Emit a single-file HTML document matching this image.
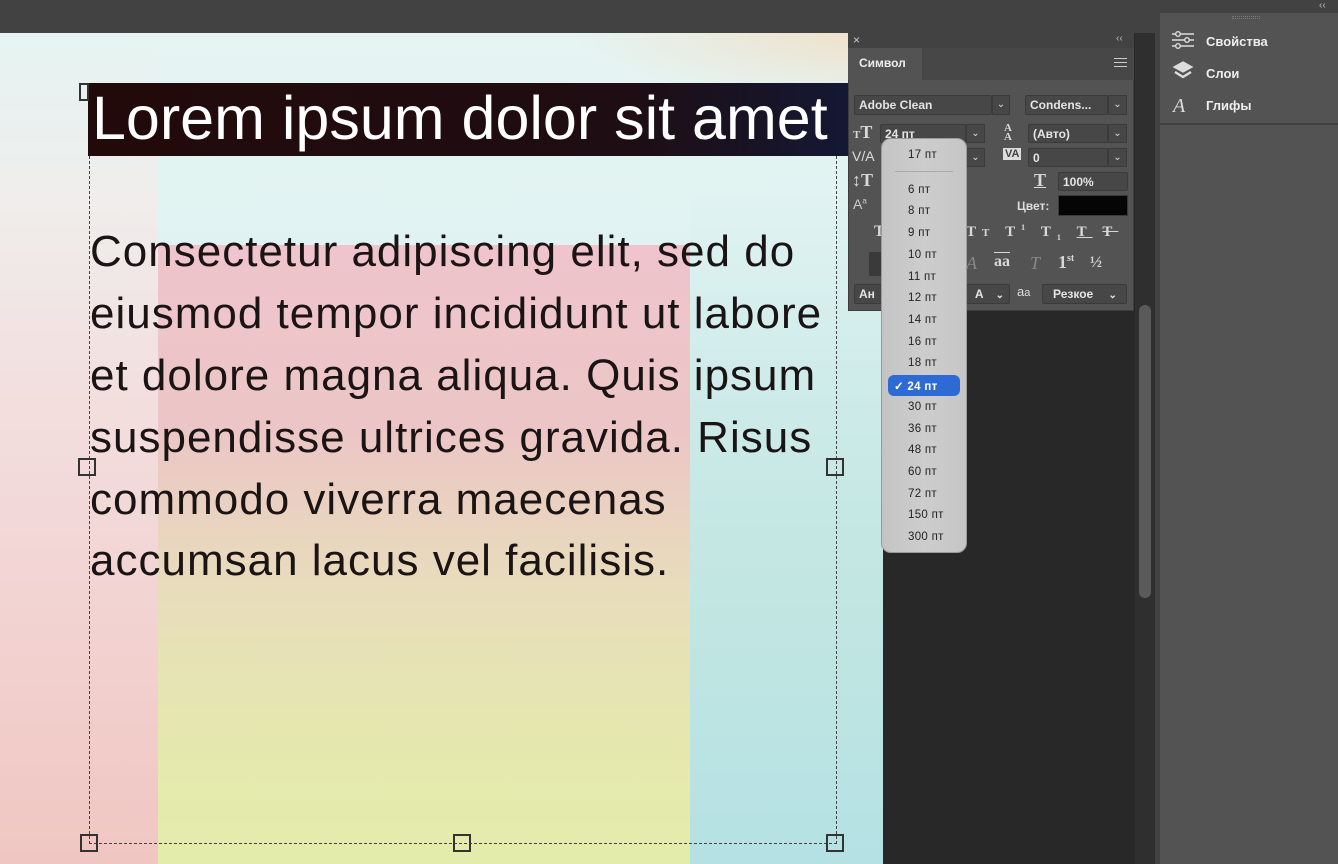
<!DOCTYPE html>
<html><head><meta charset="utf-8"><style>
*{margin:0;padding:0;box-sizing:border-box}
body{width:1338px;height:864px;overflow:hidden;background:#424242;font-family:"Liberation Sans",sans-serif;position:relative}
.a{position:absolute}
#canvas{left:0;top:33px;width:883px;height:831px;overflow:hidden;
background:linear-gradient(180deg,#e6f4f2 0%,#dff3f2 30%,#d6eeee 60%,#cfeaea 100%);}
.t{color:#1a1414;font-size:44px;letter-spacing:1px;white-space:nowrap;position:absolute;left:90px}
.f{background:#474747;border:1px solid #3b3b3b;border-radius:2px;color:#e4e4e4;font-size:12px;font-weight:bold;padding-left:4px;line-height:18px}
.ch{background:#474747;border:1px solid #3b3b3b;color:#ddd;font-size:10px;text-align:center;line-height:18px}
.ic{color:#d8d8d8;font-family:"Liberation Serif",serif;font-weight:bold;font-size:18px}
.dd{position:absolute;left:908px;font-size:11.5px;color:#222;letter-spacing:.3px}
.h{position:absolute;width:18px;height:18px;border:2px solid #333;background:transparent}
</style></head><body>
<div id="canvas" class="a">
  <div class="a" style="left:0;top:0;width:158px;height:831px;background:linear-gradient(180deg,rgba(243,230,228,0) 0%,rgba(243,236,234,.8) 20%,#f3dede 45%,#f0c6c2 100%)"></div>
  <div class="a" style="left:0;top:0;width:883px;height:200px;background:radial-gradient(ellipse at 100% 0%,#efe0c8 0%,rgba(240,230,210,0) 25%)"></div>
  <div class="a" style="left:158px;top:212px;width:532px;height:619px;background:linear-gradient(180deg,#efc4cc 0%,#ecc6c6 30%,#e8dcbc 55%,#e5e8ae 80%,#e4ecab 100%)"></div>
  <div class="a" style="left:690px;top:150px;width:193px;height:681px;background:linear-gradient(180deg,rgba(216,239,238,0),#c2e6e2 60%,#b5e1e4)"></div>
  <div class="a" style="left:88px;top:50px;width:760px;height:73px;background:linear-gradient(90deg,#230a0a 0%,#1e0d12 70%,#141833 100%)"></div>
  <div class="a" style="left:92px;top:48px;color:#fff;font-size:61px;letter-spacing:0;white-space:nowrap;line-height:75px">Lorem ipsum dolor sit amet</div>
  <div class="a" style="left:89px;top:123px;width:748px;height:688px;border-left:1px dashed #444;border-right:1px dashed #444;border-bottom:1px dashed #444"></div>
  <div class="t" style="top:194px">Consectetur adipiscing elit, sed do</div>
  <div class="t" style="top:256px">eiusmod tempor incididunt ut labore</div>
  <div class="t" style="top:318px">et dolore magna aliqua. Quis ipsum</div>
  <div class="t" style="top:380px">suspendisse ultrices gravida. Risus</div>
  <div class="t" style="top:442px">commodo viverra maecenas</div>
  <div class="t" style="top:503px">accumsan lacus vel facilisis.</div>
  <div class="h" style="left:79px;top:50px;width:10px;height:18px"></div>
  <div class="h" style="left:78px;top:425px"></div>
  <div class="h" style="left:826px;top:425px"></div>
  <div class="h" style="left:80px;top:801px"></div>
  <div class="h" style="left:453px;top:801px"></div>
  <div class="h" style="left:826px;top:801px"></div>
</div>
<div class="a" style="left:883px;top:33px;width:252px;height:831px;background:#282828"></div>
<div class="a" style="left:1135px;top:33px;width:20px;height:831px;background:#2f2f2f"></div>
<div class="a" style="left:1139px;top:305px;width:12px;height:293px;background:#5a5a5a;border-radius:6px"></div>
<div class="a" style="left:1160px;top:13px;width:178px;height:851px;background:#535353"></div>
<div class="a" style="left:1160px;top:123px;width:178px;height:2px;background:#3f3f3f"></div>
<div class="a" style="left:1319px;top:0px;color:#bbb;font-size:10px">&lsaquo;&lsaquo;</div>
<div class="a" style="left:1232px;top:16px;width:28px;height:3px;border-top:1px dotted #777;border-bottom:1px dotted #777"></div>
<svg class="a" style="left:1172px;top:30px" width="22" height="88" viewBox="0 0 22 88" fill="none" stroke="#ddd" stroke-width="1.4">
<path d="M0 4h22M0 10h22M0 16h22"/><circle cx="6" cy="4" r="2.3" fill="#535353"/><circle cx="15" cy="10" r="2.3" fill="#535353"/><circle cx="6" cy="16" r="2.3" fill="#535353"/>
<path d="M11 32l9 5-9 5-9-5z" fill="#ddd"/><path d="M3 42l8 5 8-5" stroke-width="2.4"/>
<text x="1" y="82" font-family="Liberation Serif" font-style="italic" font-size="20" fill="#ddd" stroke="none">A</text></svg>
<div class="a" style="left:1206px;top:34px;color:#eee;font-size:13px;font-weight:bold">Свойства</div>
<div class="a" style="left:1206px;top:66px;color:#eee;font-size:13px;font-weight:bold">Слои</div>
<div class="a" style="left:1206px;top:98px;color:#eee;font-size:13px;font-weight:bold">Глифы</div>
<!-- character panel -->
<div class="a" style="left:848px;top:33px;width:286px;height:278px;background:#535353;border:1px solid #3d3d3d"></div>
<div class="a" style="left:848px;top:33px;width:286px;height:15px;background:#424242"></div>
<div class="a" style="left:853px;top:33px;color:#ccc;font-size:12px">×</div>
<div class="a" style="left:1116px;top:33px;color:#bbb;font-size:10px">&lsaquo;&lsaquo;</div>
<div class="a" style="left:848px;top:48px;width:286px;height:32px;background:#474747"></div>
<div class="a" style="left:848px;top:48px;width:74px;height:32px;background:#535353;color:#eee;font-size:12px;font-weight:bold;padding:8px 0 0 11px">Символ</div>
<div class="a" style="left:1114px;top:58px;width:13px;height:9px;border-top:1px solid #ccc;border-bottom:1px solid #ccc"><div style="margin-top:3px;border-top:1px solid #ccc"></div></div>
<div class="a f" style="left:854px;top:95px;width:138px;height:20px">Adobe Clean</div><div class="a ch" style="left:992px;top:95px;width:18px;height:20px">⌄</div>
<div class="a f" style="left:1025px;top:95px;width:83px;height:20px">Condens...</div><div class="a ch" style="left:1108px;top:95px;width:19px;height:20px">⌄</div>
<div class="a ic" style="left:853px;top:122px"><span style="font-size:11px">T</span>T</div>
<div class="a f" style="left:880px;top:124px;width:86px;height:19px">24 пт</div><div class="a ch" style="left:966px;top:124px;width:19px;height:19px">⌄</div>
<div class="a ic" style="left:1004px;top:124px;font-size:11px;line-height:9px">A<br>A</div>
<div class="a f" style="left:1028px;top:124px;width:80px;height:19px">(Авто)</div><div class="a ch" style="left:1108px;top:124px;width:19px;height:19px">⌄</div>
<div class="a" style="left:852px;top:148px;color:#ddd;font-size:14px">V/A</div>
<div class="a ch" style="left:966px;top:148px;width:19px;height:19px">⌄</div>
<div class="a" style="left:1003px;top:148px;background:#ddd;color:#444;font-size:11px;font-weight:bold;padding:0 2px">VA</div>
<div class="a f" style="left:1028px;top:148px;width:80px;height:19px">0</div><div class="a ch" style="left:1108px;top:148px;width:19px;height:19px">⌄</div>
<div class="a ic" style="left:852px;top:170px">↕T</div>
<div class="a ic" style="left:1034px;top:170px;text-decoration:underline">T</div>
<div class="a f" style="left:1058px;top:172px;width:70px;height:19px">100%</div>
<div class="a" style="left:853px;top:196px;color:#ccc;font-size:14px">A<sup style="font-size:8px">a</sup></div>
<div class="a" style="left:1017px;top:199px;color:#ddd;font-size:12px;font-weight:bold">Цвет:</div>
<div class="a" style="left:1058px;top:195px;width:70px;height:21px;background:#050505;border:1px solid #3a3a3a"></div>
<div class="a ic" style="left:874px;top:223px;font-size:16px">T</div>
<div class="a ic" style="left:966px;top:223px;font-size:15px;letter-spacing:6px">T<span style="font-size:11px">T</span>&nbsp;T<sup style="font-size:8px">1</sup>&nbsp;T<sub style="font-size:8px">1</sub>&nbsp;<u>T</u>&nbsp;<s>T</s></div>
<div class="a" style="left:869px;top:252px;width:16px;height:24px;background:#3a3a3a"></div>
<div class="a" style="left:966px;top:253px;color:#888;font-family:'Liberation Serif',serif;font-style:italic;font-size:18px">A</div>
<div class="a ic" style="left:994px;top:253px;font-size:16px;text-decoration:overline">aa</div>
<div class="a" style="left:1030px;top:253px;color:#888;font-family:'Liberation Serif',serif;font-style:italic;font-size:18px">T</div>
<div class="a ic" style="left:1058px;top:252px;font-size:18px">1<sup style="font-size:10px">st</sup></div>
<div class="a ic" style="left:1090px;top:254px;font-size:16px">½</div>
<div class="a f" style="left:854px;top:284px;width:156px;height:20px">Ан<span style="margin-left:100px">А</span><span style="margin-left:12px;font-size:10px">⌄</span></div>
<div class="a" style="left:1017px;top:284px;color:#ddd;font-size:13px">a<span style="font-size:11px">a</span></div>
<div class="a f" style="left:1042px;top:284px;width:85px;height:20px;padding-left:10px">Резкое <span style="margin-left:12px;font-size:10px">⌄</span></div>
<!-- dropdown -->
<div class="a" style="left:881px;top:138px;width:86px;height:415px;background:linear-gradient(90deg,#c4c4c4,#cdcdcd 50%,#c6c6c6);border-radius:10px;border:1px solid #9a9a9a"></div>
<div class="a" style="left:895px;top:171px;width:58px;height:1px;background:#aaa"></div>
<div class="dd" style="top:149px">17 пт</div>
<div class="dd" style="top:184px">6 пт</div>
<div class="dd" style="top:205px">8 пт</div>
<div class="dd" style="top:227px">9 пт</div>
<div class="dd" style="top:249px">10 пт</div>
<div class="dd" style="top:271px">11 пт</div>
<div class="dd" style="top:292px">12 пт</div>
<div class="dd" style="top:314px">14 пт</div>
<div class="dd" style="top:336px">16 пт</div>
<div class="dd" style="top:357px">18 пт</div>
<div class="a" style="left:888px;top:375px;width:72px;height:21px;background:#2e6ad4;border-radius:6px"></div>
<div class="dd" style="top:379px;left:894px;color:#fff;font-weight:bold">✓ 24 пт</div>
<div class="dd" style="top:401px">30 пт</div>
<div class="dd" style="top:423px">36 пт</div>
<div class="dd" style="top:444px">48 пт</div>
<div class="dd" style="top:466px">60 пт</div>
<div class="dd" style="top:488px">72 пт</div>
<div class="dd" style="top:509px">150 пт</div>
<div class="dd" style="top:531px">300 пт</div>
</body></html>
